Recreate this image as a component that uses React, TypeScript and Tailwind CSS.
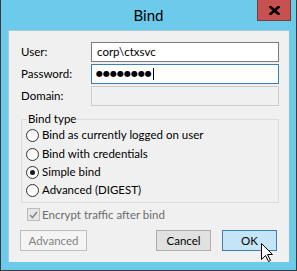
import React from "react";

function Radio({ checked, label, className = "" }: { checked?: boolean; label: string; className?: string }) {
  return (
    <div className={`flex items-center h-[18px] ${className}`}>
      <span className="w-[13px] h-[13px] rounded-full border border-[#333333] bg-gradient-to-b from-[#f3f3f3] to-white flex items-center justify-center shrink-0">
        {checked && <span className="w-[5px] h-[5px] rounded-full bg-[#1a1a1a]" />}
      </span>
      <span className="ml-[3px] whitespace-nowrap">{label}</span>
    </div>
  );
}

function Field({ label, children }: { label: string; children: React.ReactNode }) {
  return (
    <div className="flex items-center h-[20px]">
      <span className="w-[70px] shrink-0">{label}</span>
      {children}
    </div>
  );
}

export default function App() {
  return (
    <div className="w-[297px] h-[271px] bg-[#6ccbeb] border-x border-b border-[#3b3b3b] flex flex-col font-['Segoe_UI',Lato,sans-serif] text-[11.5px] text-black relative overflow-hidden">
      {/* title bar */}
      <div className="h-[30px] shrink-0 grid grid-cols-[1fr_auto_1fr]">
        <div />
        <div className="self-center text-[15px] leading-none">Bind</div>
        <div className="justify-self-end mr-[5px]">
          <button className="w-[34px] h-[21px] bg-[#c75050] border-x border-b border-[#7b3b3b] flex items-center justify-center">
            <svg width="11" height="9" viewBox="0 0 11 9">
              <path d="M1.5 1 L9.5 8 M9.5 1 L1.5 8" stroke="#000" strokeWidth="2.6" strokeLinecap="square" />
            </svg>
          </button>
        </div>
      </div>

      {/* client area */}
      <div className="mx-[7px] h-[232px] shrink-0 bg-[#f0f0f0] border-t border-l border-[#a9c7d4] pt-[11px] pl-[12px] pr-[10px] flex flex-col">
        <Field label="User:">
          <div className="w-[188px] h-[20px] border border-[#7a7a7a] bg-white flex items-center pl-[5px]">corp\ctxsvc</div>
        </Field>
        <div className="mt-[2px]">
          <Field label="Password:">
            <div className="w-[188px] h-[20px] border border-[#3c7fb1] bg-white flex items-center pl-[4px]">
              <span className="font-['DejaVu_Sans',sans-serif] text-[8px] leading-none">●●●●●●●●</span>
              <span className="ml-px w-px h-[12px] bg-black" />
            </div>
          </Field>
        </div>
        <div className="mt-[2px]">
          <Field label="Domain:">
            <div className="w-[188px] h-[20px] border border-[#cccccc] bg-[#f0f0f0]" />
          </Field>
        </div>

        {/* group box */}
        <div className="relative mt-[13px] h-[84px] border border-[#dcdcdc] pt-[6px] pl-[4px]">
          <span className="absolute -top-[9px] left-[5px] px-px bg-[#f0f0f0] leading-[16px]">Bind type</span>
          <Radio label="Bind as currently logged on user" />
          <Radio label="Bind with credentials" className="mt-px" />
          <Radio label="Simple bind" checked />
          <Radio label="Advanced (DIGEST)" />
        </div>

        {/* checkbox */}
        <div className="flex items-center h-[15px] mt-[4px] pl-[6px] text-[#6d6d6d]">
          <span className="w-[13px] h-[13px] border border-[#bcbcbc] bg-[#e6e6e6] flex items-center justify-center shrink-0">
            <svg width="9" height="8" viewBox="0 0 9 8">
              <path d="M1 4 L3.5 6.5 L8 1" stroke="#8a8a8a" strokeWidth="1.6" fill="none" />
            </svg>
          </span>
          <span className="ml-[2px]">Encrypt traffic after bind</span>
        </div>

        {/* buttons */}
        <div className="flex mt-[8px] -ml-px pr-[2px]">
          <button className="w-[67px] h-[21px] border border-[#bfbfbf] bg-[#f4f4f4] text-[#838383]">Advanced</button>
          <div className="flex-1" />
          <button className="w-[55px] h-[21px] border border-[#adadad] bg-[#e1e1e1]">Cancel</button>
          <button className="ml-[11px] w-[55px] h-[21px] border border-[#3c7fb1] bg-[#c4e5f6]">OK</button>
        </div>
      </div>

      {/* mouse pointer */}
      <svg className="absolute left-[260px] top-[243px]" width="13" height="20" viewBox="0 0 13 20">
        <path d="M0.5 0.5 L0.5 16.5 L4.5 12.5 L7.5 18.5 L9.5 17.5 L6.5 11.5 L11.5 11.5 Z" fill="#fff" stroke="#000" strokeWidth="1" />
      </svg>
    </div>
  );
}
